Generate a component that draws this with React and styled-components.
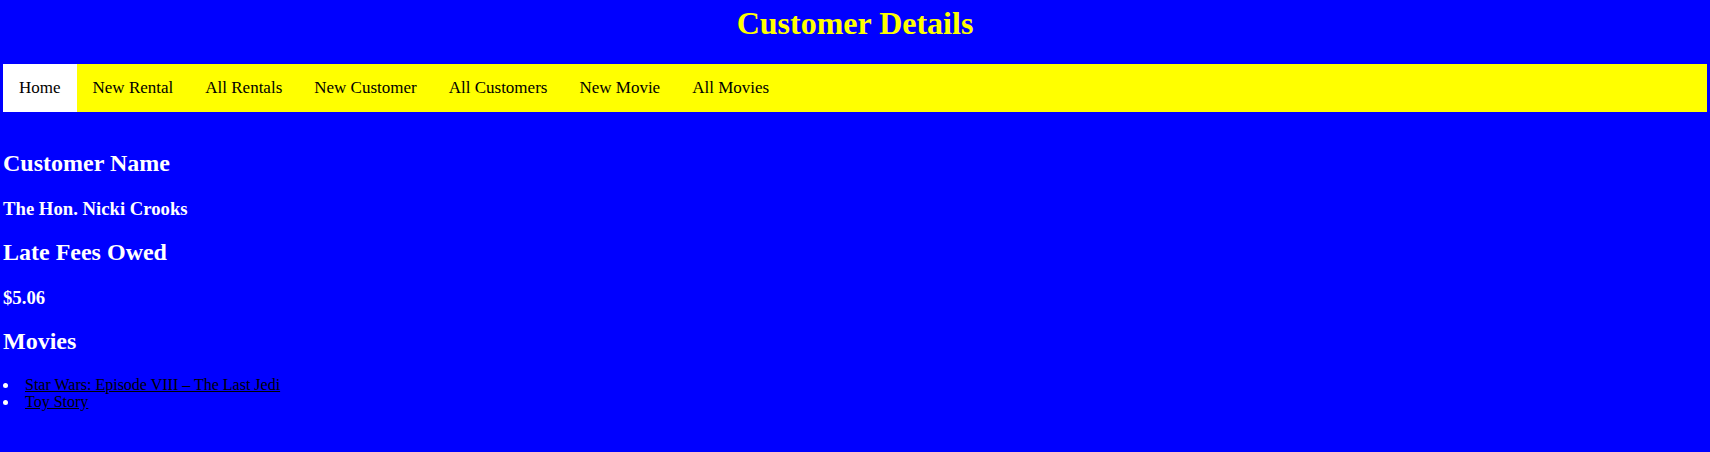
import React from "react";
import styled, { createGlobalStyle } from "styled-components";

const GlobalStyle = createGlobalStyle`
  html, body {
    margin: 0;
    padding: 0;
    background: #0000ff;
  }
  body {
    font-family: "Liberation Serif", "Times New Roman", serif;
  }
`;

const Page = styled.div`
  padding: 0 3px 40px;
  background: #0000ff;
  min-height: 452px;
  box-sizing: border-box;
`;

const Title = styled.h1`
  margin: 5px 0 22px;
  text-align: center;
  color: #ffff00;
  font-size: 32px;
  font-weight: bold;
  line-height: 37px;
`;

const NavBar = styled.nav`
  display: flex;
  align-items: stretch;
  background: #ffff00;
  height: 48px;
`;

const NavItem = styled.a`
  display: block;
  padding: 14px 16px;
  font-size: 17px;
  line-height: 20px;
  color: #000;
  text-decoration: none;
  background: ${(p) => (p.$active ? "#ffffff" : "transparent")};
  cursor: pointer;
`;

const Content = styled.section`
  padding-top: 18.5px;
  color: #ffffff;
`;

const SectionTitle = styled.h2`
  margin: 19.92px 0;
  font-size: 24px;
  font-weight: bold;
  line-height: 27.6px;
  color: #ffffff;
`;

const Value = styled.h3`
  margin: 18.72px 0;
  font-size: 18.72px;
  font-weight: bold;
  line-height: 21.5px;
  color: #ffffff;
`;

const MovieList = styled.ul`
  margin: 16px 0;
  padding: 0;
  list-style: none;
  color: #ffffff;
  font-size: 16px;
  line-height: 17.7px;
`;

const MovieItem = styled.li`
  display: flex;
  align-items: center;
`;

const Bullet = styled.span`
  flex: none;
  width: 5px;
  height: 5px;
  margin: 1px 17px 0 0;
  border-radius: 50%;
  background: #ffffff;
`;

const MovieLink = styled.a`
  color: #000000;
  text-decoration: underline;
  cursor: pointer;
`;

const navItems = [
  "Home",
  "New Rental",
  "All Rentals",
  "New Customer",
  "All Customers",
  "New Movie",
  "All Movies",
];

const movies = ["Star Wars: Episode VIII \u2013 The Last Jedi", "Toy Story"];

export default function App() {
  return (
    <>
      <GlobalStyle />
      <Page>
        <Title>Customer Details</Title>
        <NavBar>
          {navItems.map((item, i) => (
            <NavItem key={item} $active={i === 0}>
              {item}
            </NavItem>
          ))}
        </NavBar>
        <Content>
          <SectionTitle>Customer Name</SectionTitle>
          <Value>The Hon. Nicki Crooks</Value>
          <SectionTitle>Late Fees Owed</SectionTitle>
          <Value>$5.06</Value>
          <SectionTitle>Movies</SectionTitle>
          <MovieList>
            {movies.map((m) => (
              <MovieItem key={m}>
                <Bullet />
                <MovieLink>{m}</MovieLink>
              </MovieItem>
            ))}
          </MovieList>
        </Content>
      </Page>
    </>
  );
}
